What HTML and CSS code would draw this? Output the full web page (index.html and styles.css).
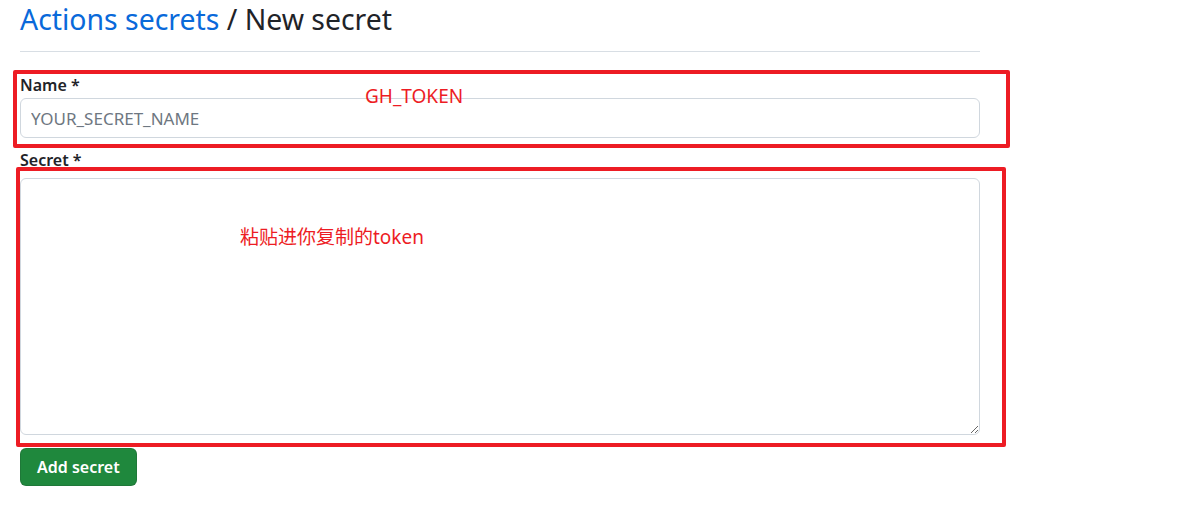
FILE: index.html
```html
<!DOCTYPE html>
<html lang="en">
<head>
<meta charset="utf-8">
<title>New secret</title>
<link rel="stylesheet" href="styles.css">
</head>
<body>
<main class="page">
  <header class="page-head">
    <h1 class="title"><a class="crumb" href="#">Actions secrets</a> / New secret</h1>
  </header>
  <form class="secret-form">
    <div class="field field-name">
      <label class="label" for="name">Name *</label>
      <input class="input" id="name" type="text" placeholder="YOUR_SECRET_NAME">
    </div>
    <div class="field field-secret">
      <label class="label" for="secret">Secret *</label>
      <textarea class="textarea" id="secret"></textarea>
    </div>
    <button class="btn-primary" type="button">Add secret</button>
  </form>

  <div class="annot-box annot-box-name"></div>
  <div class="annot-box annot-box-secret"></div>
  <span class="annot-text annot-text-name">GH_TOKEN</span>
  <span class="annot-text annot-text-secret">粘贴进你复制的token</span>
</main>
</body>
</html>
```

FILE: styles.css
```css
* { box-sizing: border-box; }

html, body {
  margin: 0;
  padding: 0;
  background: #ffffff;
}

body {
  font-family: "Noto Sans", "Open Sans", sans-serif;
  color: #1f2328;
}

.page {
  position: relative;
  width: 1196px;
  height: 515px;
  padding: 0 0 0 20px;
}

.page-head {
  width: 960px;
  padding-top: 0;
  padding-bottom: 13px;
  border-bottom: 1px solid #d8dee4;
}

.title {
  margin: 0;
  font-size: 28.4px;
  line-height: 38px;
  font-weight: 400;
  color: #1f2328;
}

.crumb {
  color: #0969da;
  text-decoration: none;
}

.secret-form {
  width: 960px;
  display: flex;
  flex-direction: column;
  align-items: flex-start;
}

.field {
  width: 100%;
  display: flex;
  flex-direction: column;
}

.field-name { margin-top: 23px; gap: 3px; }
.field-secret { margin-top: 12px; gap: 8px; }

.label {
  font-size: 16px;
  line-height: 20px;
  font-weight: 600;
  color: #1f2328;
}

.input,
.textarea {
  width: 100%;
  font-family: "Noto Sans", "Open Sans", sans-serif;
  font-size: 17px;
  color: #1f2328;
  background: #ffffff;
  border: 1px solid #d0d7de;
  border-radius: 6px;
  outline: none;
}

.input {
  height: 40px;
  padding: 0 10px;
}

.input::placeholder {
  color: #6e7781;
}

.textarea {
  height: 257px;
  padding: 8px 10px;
  resize: vertical;
}

.btn-primary {
  margin-top: 13px;
  height: 38px;
  padding: 0 16px;
  font-family: "Noto Sans", "Open Sans", sans-serif;
  font-size: 16px;
  font-weight: 600;
  color: #ffffff;
  background: #1f883d;
  border: 1px solid rgba(31, 35, 40, 0.15);
  border-radius: 6px;
}

.annot-box {
  position: absolute;
  border: 4px solid #ed1c24;
  border-radius: 2px;
  pointer-events: none;
}

.annot-box-name {
  left: 13px;
  top: 70px;
  width: 997px;
  height: 78px;
}

.annot-box-secret {
  left: 16px;
  top: 167px;
  width: 990px;
  height: 280px;
}

.annot-text {
  position: absolute;
  font-family: "Noto Sans", "Noto Sans CJK SC", sans-serif;
  font-size: 19px;
  line-height: 24px;
  color: #ed1c24;
  white-space: nowrap;
}

.annot-text-name {
  left: 365px;
  top: 84px;
}

.annot-text-secret {
  left: 240px;
  top: 225px;
}
```
